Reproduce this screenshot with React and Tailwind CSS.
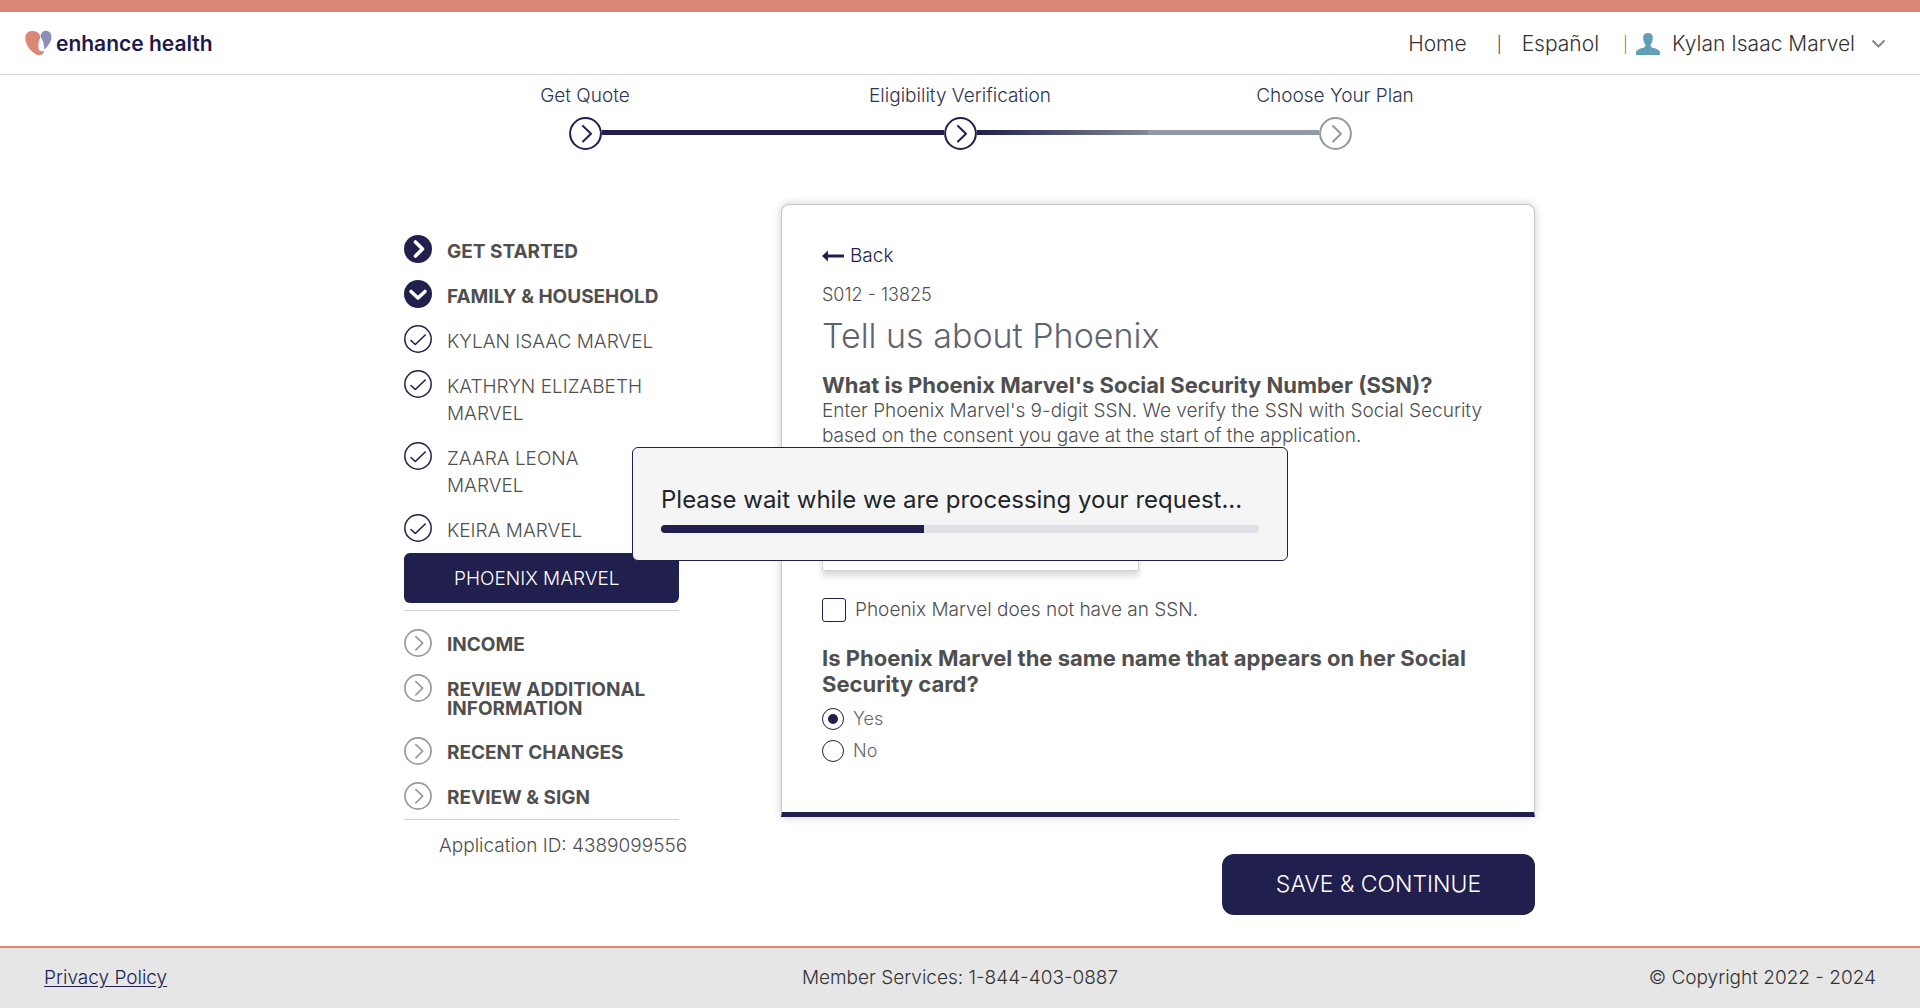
const NAVY = '#211f4d';

function ChevronRing({ size, color }) {
  return (
    <svg width={size} height={size} viewBox="0 0 33 33" fill="none" className="shrink-0" aria-hidden="true">
      <circle cx="16.5" cy="16.5" r="15.4" fill="white" stroke={color} strokeWidth="2" />
      <path d="M14 9l8 7.7-8 7.8" stroke={color} strokeWidth="2" strokeLinecap="round" strokeLinejoin="round" />
    </svg>
  );
}

function SolidChevron({ down }) {
  return (
    <svg width="28" height="28" viewBox="0 0 28 28" fill="none" className="shrink-0" aria-hidden="true">
      <circle cx="14" cy="14" r="14" fill={NAVY} />
      <path
        d={down ? 'M7 11.500l7 6.500 7-6.500' : 'M11.500 7l7 7-7 7'}
        stroke="white"
        strokeWidth="3.6"
        strokeLinecap="round"
        strokeLinejoin="round"
      />
    </svg>
  );
}

function CheckRing() {
  return (
    <svg width="28" height="28" viewBox="0 0 28 28" fill="none" className="shrink-0" aria-hidden="true">
      <circle cx="14" cy="14" r="13.2" stroke={NAVY} strokeWidth="1.5" />
      <path d="M7 15.5l4.3 4L21.2 10" stroke={NAVY} strokeWidth="1.6" strokeLinecap="round" strokeLinejoin="round" />
    </svg>
  );
}

function Logo() {
  return (
    <a href="#" className="flex items-center gap-1 text-[#1d1a4b]" aria-label="enhance health">
      <svg width="27" height="26" viewBox="0 0 27 26" aria-hidden="true">
        <path
          d="M15 5.500C13.600 2.500 11.500 1 7.500 1 3 1 .3 3.700.3 8c0 6.500 4.500 12.300 9.500 15.700 3.500 2.300 8.800 2.300 9.400-3.200-1.400 1.300-3.600 1.100-4.900-.6-1.700-2.500-1.100-7.900.7-11.700z"
          fill="#db8776"
        />
        <path
          d="M15.400 6.500C16 3 17.500.7 20.800.7c3.300 0 5.700 2.200 5.700 6 0 5.300-4 9.300-7 13.200-.4-4.400-1.200-9.900-4.100-13.400z"
          fill="#8b90b6"
        />
      </svg>
      <span className="pt-0.5 text-[21px] leading-6 font-semibold">enhance health</span>
    </a>
  );
}

function Header() {
  return (
    <header className="flex h-[75px] items-center justify-between border-t-12 border-b border-t-[#db8776] border-b-[#d8d8d8] pr-[34px] pl-[25px]">
      <Logo />
      <nav className="flex items-center pt-0.5 text-[21px] leading-6 text-[#333]">
        <a href="#">Home</a>
        <span className="mr-5 ml-[30px] text-base text-[#5b2250]">|</span>
        <a href="#">Español</a>
        <span className="mr-2 ml-6 text-base text-[#b5772a]">|</span>
        <button type="button" className="flex items-center">
          <svg width="24" height="22" viewBox="0 0 24 22" className="mr-3" aria-hidden="true">
            <path
              d="M12 0c3.300 0 5 1.600 4.800 5 0 2.800-.8 4.700-2 6.300-.5 1.900.1 2.900 1.700 3.500 3.700 1 7.500 1.700 7.500 5.200v2H0v-2c0-3.500 3.800-4.200 7.500-5.200 1.600-.6 2.200-1.600 1.700-3.500-1.200-1.600-2-3.500-2-6.300C7 1.600 8.700 0 12 0z"
              fill="#619fb9"
            />
          </svg>
          Kylan Isaac Marvel
          <svg width="15" height="10" viewBox="0 0 14 10" fill="none" className="ml-4" aria-hidden="true">
            <path d="M1 1.500l6 6 6-6" stroke="#888" strokeWidth="2" />
          </svg>
        </button>
      </nav>
    </header>
  );
}

function Stepper() {
  return (
    <ol className="mx-auto grid w-full max-w-[1125px] grid-cols-3 pt-[9px] text-center text-[19px] leading-6 text-[#2d3350]">
      <li className="flex flex-col items-center gap-[9px]">
        Get Quote
        <div className="flex w-full items-center">
          <div className="flex-1" />
          <ChevronRing size={33} color={NAVY} />
          <div className="mb-[3px] h-[5px] flex-1 bg-[#211f4d]" />
        </div>
      </li>
      <li className="flex flex-col items-center gap-[9px]">
        Eligibility Verification
        <div className="flex w-full items-center">
          <div className="mb-[3px] h-[5px] flex-1 bg-[#211f4d]" />
          <ChevronRing size={33} color={NAVY} />
          <div className="mb-[3px] h-[5px] flex-1 bg-linear-to-r from-[#211f4d] to-[#858994]" />
        </div>
      </li>
      <li className="flex flex-col items-center gap-[9px]">
        Choose Your Plan
        <div className="flex w-full items-center">
          <div className="mb-[3px] h-[5px] flex-1 bg-[#9199a4]" />
          <ChevronRing size={33} color="#9199a4" />
          <div className="flex-1" />
        </div>
      </li>
    </ol>
  );
}

const MEMBERS = ['KYLAN ISAAC MARVEL', 'KATHRYN ELIZABETH MARVEL', 'ZAARA LEONA MARVEL', 'KEIRA MARVEL'];
const LATER = ['INCOME', 'REVIEW ADDITIONAL INFORMATION', 'RECENT CHANGES', 'REVIEW & SIGN'];

function Sidebar() {
  return (
    <aside className="w-[275px] shrink-0 pt-[31px] text-[#4f4f4f]">
      <ul className="flex flex-col gap-[15px] text-[19px] leading-[27px]">
        <li>
          <a href="#" className="flex gap-[15px] font-bold">
            <SolidChevron />
            <span className="pt-[3px]">GET STARTED</span>
          </a>
        </li>
        <li>
          <a href="#" className="flex gap-[15px] font-bold">
            <SolidChevron down />
            <span className="pt-[3px]">FAMILY &amp; HOUSEHOLD</span>
          </a>
        </li>
        {MEMBERS.map((name) => (
          <li key={name}>
            <a href="#" className="flex gap-[15px] font-light">
              <CheckRing />
              <span className={name.startsWith('ZAARA') ? 'w-40 pt-[3px]' : 'pt-[3px]'}>{name}</span>
            </a>
          </li>
        ))}
      </ul>
      <a
        href="#"
        aria-current="page"
        className="mt-[9px] flex h-[50px] items-center rounded-md bg-[#211f4d] pt-0.5 pl-[50px] text-[19px] text-white"
      >
        PHOENIX MARVEL
      </a>
      <ul className="mt-[7px] flex flex-col gap-[17px] border-y border-[#cfcfcf] pt-[18px] pb-[9px] text-[19px] leading-[19px] font-bold">
        {LATER.map((name) => (
          <li key={name}>
            <a href="#" className="flex gap-[15px]">
              <ChevronRing size={28} color="#999" />
              <span className="pt-[6px] pb-[2px]">{name}</span>
            </a>
          </li>
        ))}
      </ul>
      <p className="mt-[14px] pl-[35px] text-[19px] leading-6 font-light whitespace-nowrap">
        Application ID: 4389099556
      </p>
    </aside>
  );
}

function Radio({ label, checked }) {
  return (
    <label className="flex h-8 items-center gap-[9px] text-lg font-light text-[#666]">
      <input
        type="radio"
        name="same-name"
        defaultChecked={checked}
        className="size-[22px] appearance-none rounded-full border border-[#211f4d] bg-white bg-clip-content p-[5px] checked:bg-[#211f4d]"
      />
      {label}
    </label>
  );
}

function Question() {
  return (
    <section className="rounded-t-lg border border-b-5 border-[#c8c8c8] border-b-[#211f4d] bg-white px-10 pt-[39px] pb-[45px] text-[#4f4f4f] shadow-[0_0_10px_rgba(0,0,0,0.2)]">
      <a href="#" className="flex items-center gap-[6px] text-[19px] leading-6 text-[#211f4d]">
        <svg width="22" height="12" viewBox="0 0 22 12" aria-hidden="true">
          <path d="M0 6L6 .5v4h15a1.300 1.300 0 010 3H6v4z" fill={NAVY} />
        </svg>
        <span className="font-light">Back</span>
      </a>
      <p className="mt-[15px] text-lg leading-6 font-light">S012 - 13825</p>
      <h1 className="mt-[9px] text-[34px] leading-10 font-light text-[#5f6470]">Tell us about Phoenix</h1>
      <label htmlFor="ssn" className="mt-4 block text-[22px] leading-[26px] font-bold">
        What is Phoenix Marvel's Social Security Number (SSN)?
      </label>
      <p className="text-[19px] leading-[25px] font-light">
        Enter Phoenix Marvel's 9-digit SSN. We verify the SSN with Social Security based on the consent you gave at the
        start of the application.
      </p>
      <input
        id="ssn"
        type="text"
        className="mt-[73px] block h-[50px] w-[317px] border border-[#d0d4d8] bg-white px-3 shadow-[0_5px_6px_rgba(0,0,0,0.15)]"
      />
      <label className="mt-[27px] flex items-center gap-[9px] text-[19px] leading-6 font-light">
        <input
          type="checkbox"
          className="size-6 appearance-none rounded-[3px] border border-[#211f4d] bg-white checked:bg-[#211f4d]"
        />
        Phoenix Marvel does not have an SSN.
      </label>
      <fieldset className="mt-[23px]">
        <legend className="text-[22px] leading-[26px] font-bold">
          Is Phoenix Marvel the same name that appears on her Social Security card?
        </legend>
        <div className="pt-[6px]">
          <Radio label="Yes" checked />
          <Radio label="No" />
        </div>
      </fieldset>
    </section>
  );
}

function ProcessingDialog() {
  return (
    <div className="fixed inset-0 flex items-center justify-center">
      <div
        role="dialog"
        aria-labelledby="processing-text"
        className="w-[656px] rounded-md border border-[#211f4d] bg-[#f5f5f5] px-7 pt-9 pb-[27px]"
      >
        <p id="processing-text" className="text-2xl leading-8 font-normal whitespace-nowrap text-[#212529]">
          Please wait while we are processing your request...
        </p>
        <div
          role="progressbar"
          aria-label="Processing"
          aria-valuenow={44}
          aria-valuemin={0}
          aria-valuemax={100}
          className="mt-[9px] h-2 overflow-hidden rounded bg-[#dee2e6]"
        >
          <div className="h-full w-[44%] bg-[#211f4d]" />
        </div>
      </div>
    </div>
  );
}

function Footer() {
  return (
    <footer className="grid grid-cols-3 items-center border-t-2 border-[#db8776] bg-[#e6e6e6] px-11 py-[18px] text-[19px] leading-6 text-[#333]">
      <a href="#" className="justify-self-start text-[#211f4d] underline underline-offset-2">
        Privacy Policy
      </a>
      <p className="text-center">Member Services: 1-844-403-0887</p>
      <p className="text-right">© Copyright 2022 - 2024</p>
    </footer>
  );
}

export default function App() {
  return (
    <div className="flex min-h-screen flex-col bg-white font-['Inter','Open_Sans',sans-serif] font-light">
      <Header />
      <Stepper />
      <main className="mx-auto flex w-full max-w-[1150px] grow justify-between pt-[54px] pb-[31px] pl-[19px]">
        <Sidebar />
        <div className="ml-[102px] flex-1">
          <Question />
          <div className="mt-[37px] flex justify-end">
            <button type="button" className="h-[61px] w-[313px] rounded-xl bg-[#211f4d] text-[23px] text-white">
              SAVE &amp; CONTINUE
            </button>
          </div>
        </div>
      </main>
      <Footer />
      <ProcessingDialog />
    </div>
  );
}
